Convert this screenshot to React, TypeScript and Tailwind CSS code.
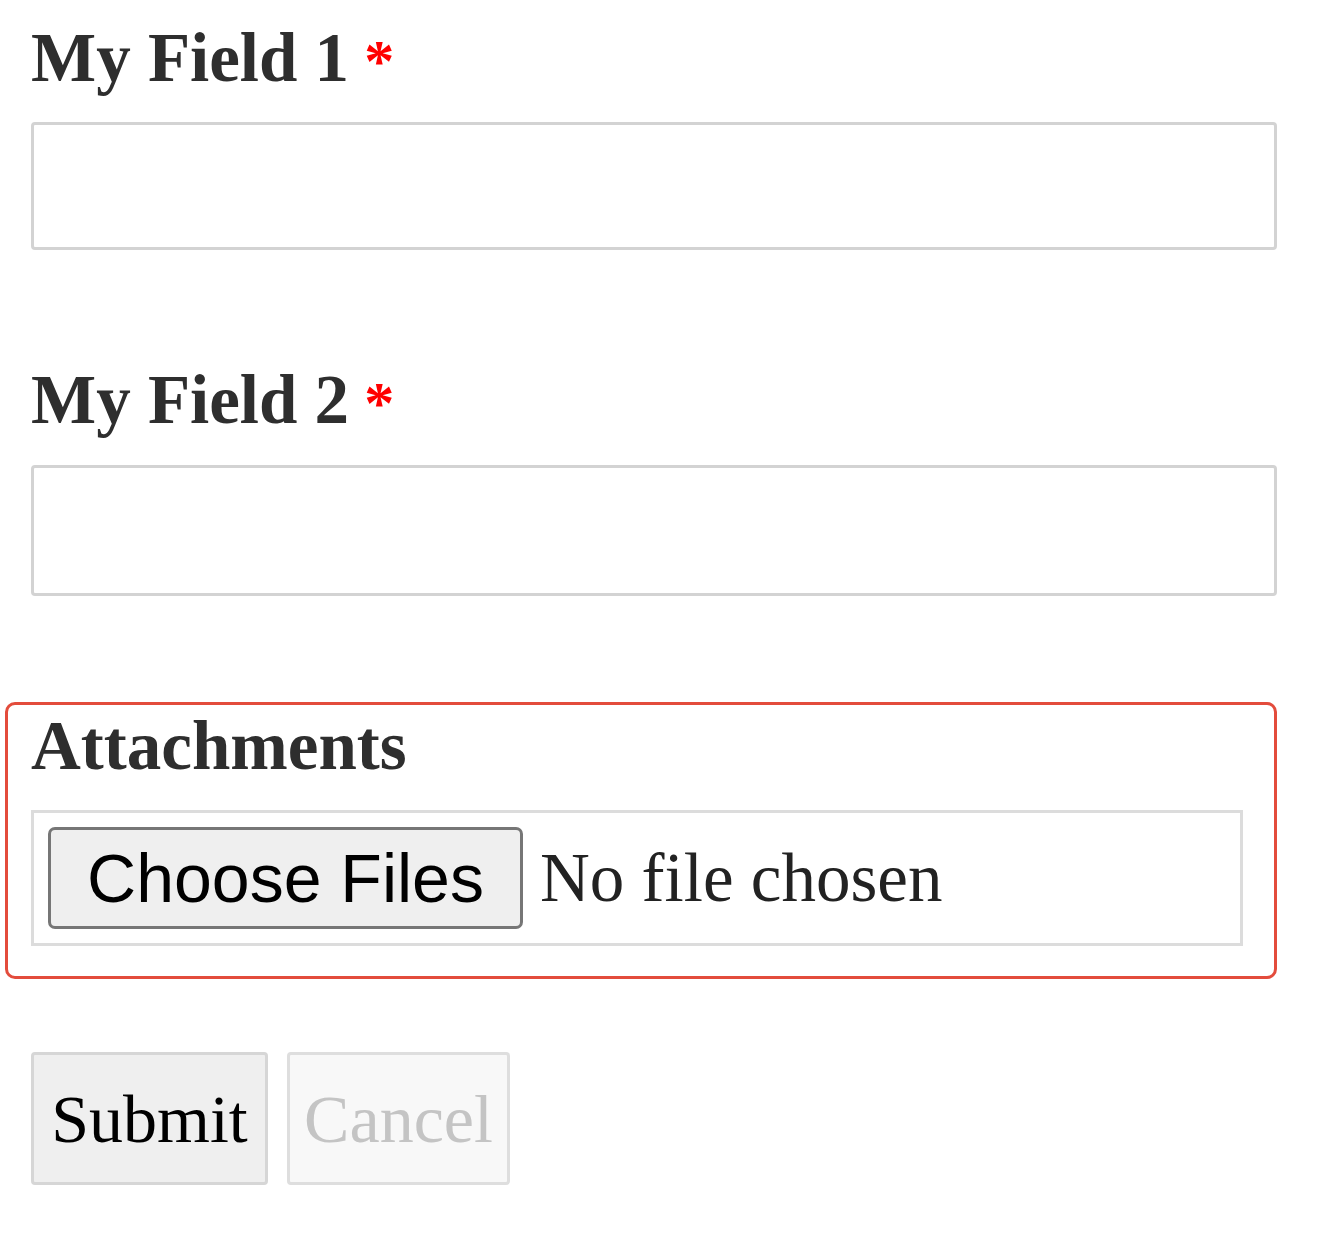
import React from 'react';

const serif = "font-['Liberation_Serif','Times_New_Roman',serif]";

const FieldLabel: React.FC<{ text: string; required?: boolean }> = ({ text, required }) => (
  <div className={`${serif} text-[69px] leading-none font-bold text-[#2e2e2e]`}>
    {text}
    {required && <span className="text-[#ff0000] text-[60px]"> *</span>}
  </div>
);

const App: React.FC = () => {
  return (
    <div className="min-h-[1252px] w-[1330px] bg-white pt-[24px]">
      {/* Field 1 */}
      <div className="pl-[31px] pr-[53px]">
        <FieldLabel text="My Field 1" required />
        <div className="mt-[29px] h-[128px] rounded-[4px] border-[3px] border-[#d3d3d3] bg-white" />
      </div>

      {/* Field 2 */}
      <div className="mt-[116px] pl-[31px] pr-[53px]">
        <FieldLabel text="My Field 2" required />
        <div className="mt-[30px] h-[131px] rounded-[4px] border-[3px] border-[#d3d3d3] bg-white" />
      </div>

      {/* Attachments (highlighted) */}
      <div className="ml-[5px] mr-[53px] mt-[106px] rounded-[10px] border-[3px] border-[#e34c3c] pb-[30px] pl-[23px] pr-[31px] pt-[7px]">
        <FieldLabel text="Attachments" />
        <div className="mt-[29px] flex h-[136px] items-center border-[3px] border-[#dcdcdc] px-[14px]">
          <div className="flex h-[102px] w-[475px] items-center justify-center rounded-[7px] border-[3px] border-[#767676] bg-[#efefef] font-['Liberation_Sans',Arial,sans-serif] text-[68px] leading-none text-black">
            Choose Files
          </div>
          <span className={`${serif} ml-[17px] text-[69px] leading-none text-[#222]`}>No file chosen</span>
        </div>
      </div>

      {/* Actions */}
      <div className="mt-[73px] flex gap-[19px] pl-[31px]">
        <button className={`${serif} flex h-[133px] w-[237px] items-center justify-center rounded-[4px] border-[3px] border-[#d6d6d6] bg-[#efefef] text-[68px] leading-none text-black`}>
          Submit
        </button>
        <button
          disabled
          className={`${serif} flex h-[133px] w-[223px] items-center justify-center rounded-[4px] border-[3px] border-[#dedede] bg-[#f8f8f8] text-[68px] leading-none text-[#c4c4c4]`}
        >
          Cancel
        </button>
      </div>
    </div>
  );
};

export default App;
